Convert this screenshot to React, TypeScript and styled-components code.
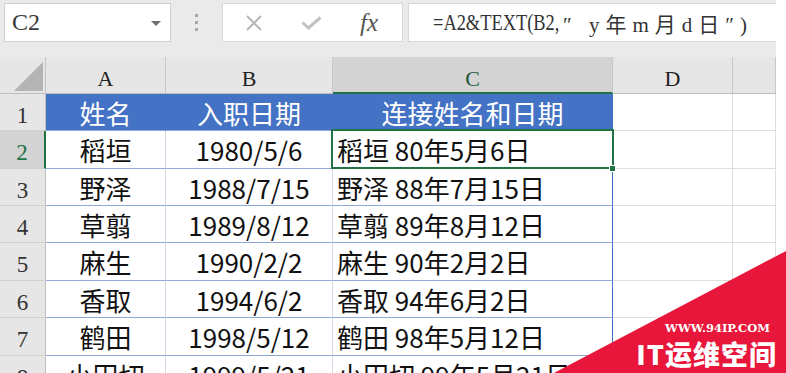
import React from 'react';
import styled, { createGlobalStyle, css } from 'styled-components';

const GlobalStyle = createGlobalStyle`
  html, body {
    margin: 0;
    padding: 0;
    background: #ffffff;
  }
  body {
    font-family: "Noto Sans CJK SC", sans-serif;
  }
`;

const Screen = styled.div`
  position: relative;
  width: 786px;
  height: 373px;
  overflow: hidden;
  background: #ffffff;
`;

const Workbook = styled.div`
  width: 776px;
`;

const FormulaBar = styled.div`
  display: flex;
  align-items: flex-start;
  height: 57px;
  box-sizing: border-box;
  padding: 3px 0 0 4px;
  background: #eaeaea;
`;

const NameBox = styled.div`
  width: 167px;
  height: 39px;
  box-sizing: border-box;
  display: flex;
  align-items: center;
  justify-content: space-between;
  padding: 0 9px 0 7px;
  background: #ffffff;
  border: 1px solid #d0d0d0;
  font-family: "Liberation Serif", serif;
  font-size: 24px;
  color: #3a3a3a;
`;

const DropArrow = styled.span`
  width: 0;
  height: 0;
  border-left: 5px solid transparent;
  border-right: 5px solid transparent;
  border-top: 5px solid #6e6e6e;
  margin-top: 2px;
`;

const Grip = styled.div`
  width: 51px;
  height: 39px;
  display: flex;
  flex-direction: column;
  align-items: center;
  justify-content: center;
  gap: 4px;
`;

const GripDot = styled.span`
  width: 3px;
  height: 3px;
  background: #a8a8a8;
`;

const IconBox = styled.div`
  width: 181px;
  height: 39px;
  box-sizing: border-box;
  display: flex;
  align-items: center;
  padding-left: 22px;
  gap: 38px;
  background: #ffffff;
  border: 1px solid #d8d8d8;
`;

const FxLabel = styled.span`
  font-family: "Liberation Serif", serif;
  font-style: italic;
  font-size: 25px;
  color: #555555;
`;

const FormulaInput = styled.div`
  flex: 1;
  height: 39px;
  box-sizing: border-box;
  margin-left: 5px;
  display: flex;
  align-items: center;
  padding-left: 24px;
  background: #ffffff;
  border: 1px solid #d8d8d8;
  border-right: none;
  color: #333333;
  white-space: nowrap;
`;

const FormulaHead = styled.span`
  width: 121px;
  font-family: "Liberation Serif", serif;
  font-size: 23px;
  transform: scaleX(0.8);
  transform-origin: left center;
`;

const FormulaTail = styled.span`
  margin-left: 9px;
  font-family: "Liberation Serif", "Noto Sans CJK SC", serif;
  font-size: 21px;
  letter-spacing: 6px;
`;

const Sheet = styled.div`
  display: grid;
  grid-template-columns: 46px 120px 167px 280px 120px 43px;
  grid-template-rows: 37px 37px 38px 37px 37px 38px 37px 38px 37px;
`;

type Kind = 'corner' | 'colhead' | 'rowhead' | 'title' | 'data' | 'empty';

const Cell = styled.div<{ $kind: Kind; $active?: boolean; $left?: boolean; $edge?: boolean; $selected?: boolean }>`
  position: relative;
  box-sizing: border-box;
  display: flex;
  align-items: center;
  justify-content: ${(p) => (p.$left ? 'flex-start' : 'center')};
  padding-left: ${(p) => (p.$left ? '4px' : '0')};
  white-space: nowrap;
  font-size: 26px;
  color: #111111;
  border-right: 1px solid #dedede;
  border-bottom: 1px solid #dedede;

  ${(p) =>
    p.$kind === 'corner' &&
    css`
      background: #e6e6e6;
      border-right: 1px solid #c4c4c4;
      border-bottom: 1px solid #bdbdbd;
    `}

  ${(p) =>
    p.$kind === 'colhead' &&
    css`
      background: ${p.$active ? '#d3d3d3' : '#e6e6e6'};
      border-right: 1px solid #c8c8c8;
      border-bottom: ${p.$active ? '2px solid #217346' : '1px solid #bdbdbd'};
      padding-top: 8px;
      font-family: "Liberation Serif", serif;
      font-size: 22px;
      color: ${p.$active ? '#1e5a38' : '#222222'};
    `}

  ${(p) =>
    p.$kind === 'rowhead' &&
    css`
      background: ${p.$active ? '#d3d3d3' : '#e6e6e6'};
      border-right: ${p.$active ? '2px solid #217346' : '1px solid #bfbfbf'};
      border-bottom: 1px solid #d0d0d0;
      padding-top: 7px;
      font-family: "Liberation Serif", serif;
      font-size: 23px;
      color: ${p.$active ? '#217346' : '#333333'};
    `}

  ${(p) =>
    p.$kind === 'title' &&
    css`
      background: #4472c4;
      color: #ffffff;
      border-right: 1px solid #4472c4;
      border-bottom: 1px solid #8ea9db;
    `}

  ${(p) =>
    p.$kind === 'data' &&
    css`
      background: #ffffff;
      border-right: 1px solid ${p.$edge ? '#4472c4' : '#d3d9e6'};
      border-bottom: 1px solid #8ea9db;
    `}

  ${(p) =>
    p.$selected &&
    css`
      &::after {
        content: '';
        position: absolute;
        top: -2px;
        left: -2px;
        right: -2px;
        bottom: -1px;
        border: 2px solid #217346;
        pointer-events: none;
      }
      &::before {
        content: '';
        position: absolute;
        right: -4px;
        bottom: -4px;
        width: 5px;
        height: 5px;
        background: #217346;
        border: 1px solid #ffffff;
        z-index: 2;
      }
    `}
`;

const CornerMark = styled.span`
  position: absolute;
  right: 2px;
  bottom: 2px;
  width: 0;
  height: 0;
  border-left: 29px solid transparent;
  border-bottom: 29px solid #b4b4b4;
`;

const Ribbon = styled.div`
  position: absolute;
  right: 0;
  bottom: 0;
  width: 232px;
  height: 122px;
  background: #e8163a;
  clip-path: polygon(0 100%, 100% 0, 100% 100%);
`;

const RibbonText = styled.div`
  position: absolute;
  right: 9px;
  bottom: 2px;
  display: flex;
  flex-direction: column;
  align-items: flex-end;
  gap: 2px;
  color: #ffffff;
`;

const RibbonUrl = styled.span`
  font-family: "DejaVu Serif", serif;
  font-weight: bold;
  font-size: 11.5px;
  line-height: 13px;
  margin-right: 7px;
`;

const RibbonName = styled.span`
  font-family: "Noto Sans CJK SC", sans-serif;
  font-weight: 900;
  font-size: 27px;
  line-height: 34px;
  letter-spacing: 1px;
`;

const CrossIcon = () => (
  <svg width="18" height="16" viewBox="0 0 18 16">
    <path d="M2 1 L16 15 M16 1 L2 15" stroke="#b8b8b8" strokeWidth="2" fill="none" />
  </svg>
);

const CheckIcon = () => (
  <svg width="21" height="14" viewBox="0 0 21 14">
    <path d="M1.5 6.5 L7.5 12 L19.5 1.5" stroke="#c2c2c2" strokeWidth="3" fill="none" />
  </svg>
);

const rows: [string, string, string][] = [
  ['稻垣', '1980/5/6', '稻垣 80年5月6日'],
  ['野泽', '1988/7/15', '野泽 88年7月15日'],
  ['草翦', '1989/8/12', '草翦 89年8月12日'],
  ['麻生', '1990/2/2', '麻生 90年2月2日'],
  ['香取', '1994/6/2', '香取 94年6月2日'],
  ['鹤田', '1998/5/12', '鹤田 98年5月12日'],
  ['小田切', '1999/5/21', '小田切 99年5月21日'],
];

const App = () => {
  return (
    <Screen>
      <GlobalStyle />
      <Workbook>
        <FormulaBar>
          <NameBox>
            <span>C2</span>
            <DropArrow />
          </NameBox>
          <Grip>
            <GripDot />
            <GripDot />
            <GripDot />
          </Grip>
          <IconBox>
            <CrossIcon />
            <CheckIcon />
            <FxLabel>fx</FxLabel>
          </IconBox>
          <FormulaInput>
            <FormulaHead>=A2&amp;TEXT(B2,</FormulaHead>
            <FormulaTail>″ y年m月d日″)</FormulaTail>
          </FormulaInput>
        </FormulaBar>

        <Sheet>
          <Cell $kind="corner">
            <CornerMark />
          </Cell>
          <Cell $kind="colhead">A</Cell>
          <Cell $kind="colhead">B</Cell>
          <Cell $kind="colhead" $active>C</Cell>
          <Cell $kind="colhead">D</Cell>
          <Cell $kind="colhead" />

          <Cell $kind="rowhead">1</Cell>
          <Cell $kind="title">姓名</Cell>
          <Cell $kind="title">入职日期</Cell>
          <Cell $kind="title" $edge>连接姓名和日期</Cell>
          <Cell $kind="empty" />
          <Cell $kind="empty" />

          {rows.map(([name, date, joined], i) => (
            <React.Fragment key={name}>
              <Cell $kind="rowhead" $active={i === 0}>{i + 2}</Cell>
              <Cell $kind="data">{name}</Cell>
              <Cell $kind="data">{date}</Cell>
              <Cell $kind="data" $left $edge $selected={i === 0}>{joined}</Cell>
              <Cell $kind="empty" />
              <Cell $kind="empty" />
            </React.Fragment>
          ))}
        </Sheet>
      </Workbook>

      <Ribbon />
      <RibbonText>
        <RibbonUrl>WWW.94IP.COM</RibbonUrl>
        <RibbonName>IT运维空间</RibbonName>
      </RibbonText>
    </Screen>
  );
};

export default App;
